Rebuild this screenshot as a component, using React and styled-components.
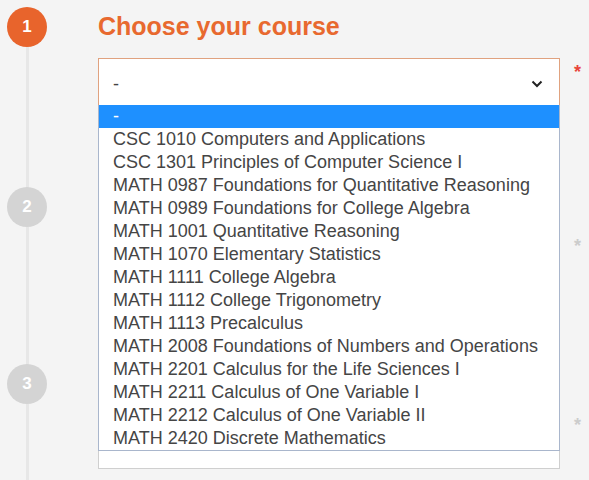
import React from "react";
import styled, { createGlobalStyle } from "styled-components";

const Global = createGlobalStyle`
  html, body { margin: 0; padding: 0; background: #f4f4f4; }
  body { font-family: "Liberation Sans", Arial, sans-serif; }
`;

const Page = styled.div`
  width: 589px;
  height: 480px;
  overflow: hidden;
  position: relative;
  background: #f4f4f4;
`;

const Steps = styled.div`
  display: flex;
  flex-direction: column;
  padding-top: 7px;
`;

const Step = styled.div`
  display: grid;
  grid-template-columns: 98px 462px 29px;
  height: ${(p) => p.h}px;
`;

const Rail = styled.div`
  display: flex;
  flex-direction: column;
  align-items: center;
  width: 54px;
`;

const Circle = styled.div`
  width: 40px;
  height: 40px;
  border-radius: 50%;
  background: ${(p) => (p.active ? "#e8642c" : "#d4d4d4")};
  color: #fff;
  font-weight: bold;
  font-size: 17px;
  display: flex;
  align-items: center;
  justify-content: center;
  flex: none;
`;

const Line = styled.div`
  width: 3px;
  flex: 1;
  background: #e7e7e7;
  margin-bottom: -7px;
`;

const Body = styled.div`
  display: flex;
  flex-direction: column;
`;

const Title = styled.h2`
  margin: 5px 0 0 0;
  font-size: 25px;
  line-height: 28px;
  font-weight: bold;
  color: #e8692f;
  height: 28px;
  white-space: nowrap;
`;

const Select = styled.div`
  margin-top: ${(p) => p.mt}px;
  height: ${(p) => p.h}px;
  box-sizing: border-box;
  border: 1px solid ${(p) => (p.active ? "#e0a27f" : "#cfcfcf")};
  background: #fff;
  display: flex;
  align-items: center;
  justify-content: space-between;
  padding: 4px 16px 0 14px;
  font-size: 18px;
  color: #444;
`;

const Star = styled.div`
  color: ${(p) => (p.active ? "#e8443a" : "#cccccc")};
  font-size: 18px;
  font-weight: bold;
  padding-left: 14px;
  margin-top: ${(p) => p.mt}px;
  line-height: 18px;
`;

const Dropdown = styled.ul`
  position: absolute;
  left: 98px;
  top: 105px;
  width: 462px;
  box-sizing: border-box;
  margin: 0;
  padding: 0;
  list-style: none;
  background: #fff;
  border: 1px solid #a9b6cc;
  border-top: none;
  font-size: 18px;
  color: #454545;
`;

const Option = styled.li`
  height: 23px;
  line-height: 23px;
  padding-left: 14px;
  white-space: nowrap;
  background: ${(p) => (p.sel ? "#1e90ff" : "transparent")};
  color: ${(p) => (p.sel ? "#fff" : "inherit")};
`;

const Chevron = () => (
  <svg width="12" height="8" viewBox="0 0 12 8">
    <path d="M1.5 1.5 L6 6 L10.5 1.5" fill="none" stroke="#222" strokeWidth="2" />
  </svg>
);

const options = [
  "-",
  "CSC 1010 Computers and Applications",
  "CSC 1301 Principles of Computer Science I",
  "MATH 0987 Foundations for Quantitative Reasoning",
  "MATH 0989 Foundations for College Algebra",
  "MATH 1001 Quantitative Reasoning",
  "MATH 1070 Elementary Statistics",
  "MATH 1111 College Algebra",
  "MATH 1112 College Trigonometry",
  "MATH 1113 Precalculus",
  "MATH 2008 Foundations of Numbers and Operations",
  "MATH 2201 Calculus for the Life Sciences I",
  "MATH 2211 Calculus of One Variable I",
  "MATH 2212 Calculus of One Variable II",
  "MATH 2420 Discrete Mathematics",
];

export default function App() {
  return (
    <Page>
      <Global />
      <Steps>
        <Step h={180}>
          <Rail>
            <Circle active>1</Circle>
            <Line />
          </Rail>
          <Body>
            <Title>Choose your course</Title>
            <Select active mt={18} h={48}>
              <span>-</span>
              <Chevron />
            </Select>
          </Body>
          <Star active mt={56}>*</Star>
        </Step>
        <Step h={177}>
          <Rail>
            <Circle>2</Circle>
            <Line />
          </Rail>
          <Body>
            <Title />
            <Select mt={14} h={48} />
          </Body>
          <Star mt={50}>*</Star>
        </Step>
        <Step h={120}>
          <Rail>
            <Circle>3</Circle>
            <Line />
          </Rail>
          <Body>
            <Title />
            <Select mt={18} h={54} />
          </Body>
          <Star mt={52}>*</Star>
        </Step>
      </Steps>
      <Dropdown>
        {options.map((o, i) => (
          <Option key={o} sel={i === 0}>
            {o}
          </Option>
        ))}
      </Dropdown>
    </Page>
  );
}
